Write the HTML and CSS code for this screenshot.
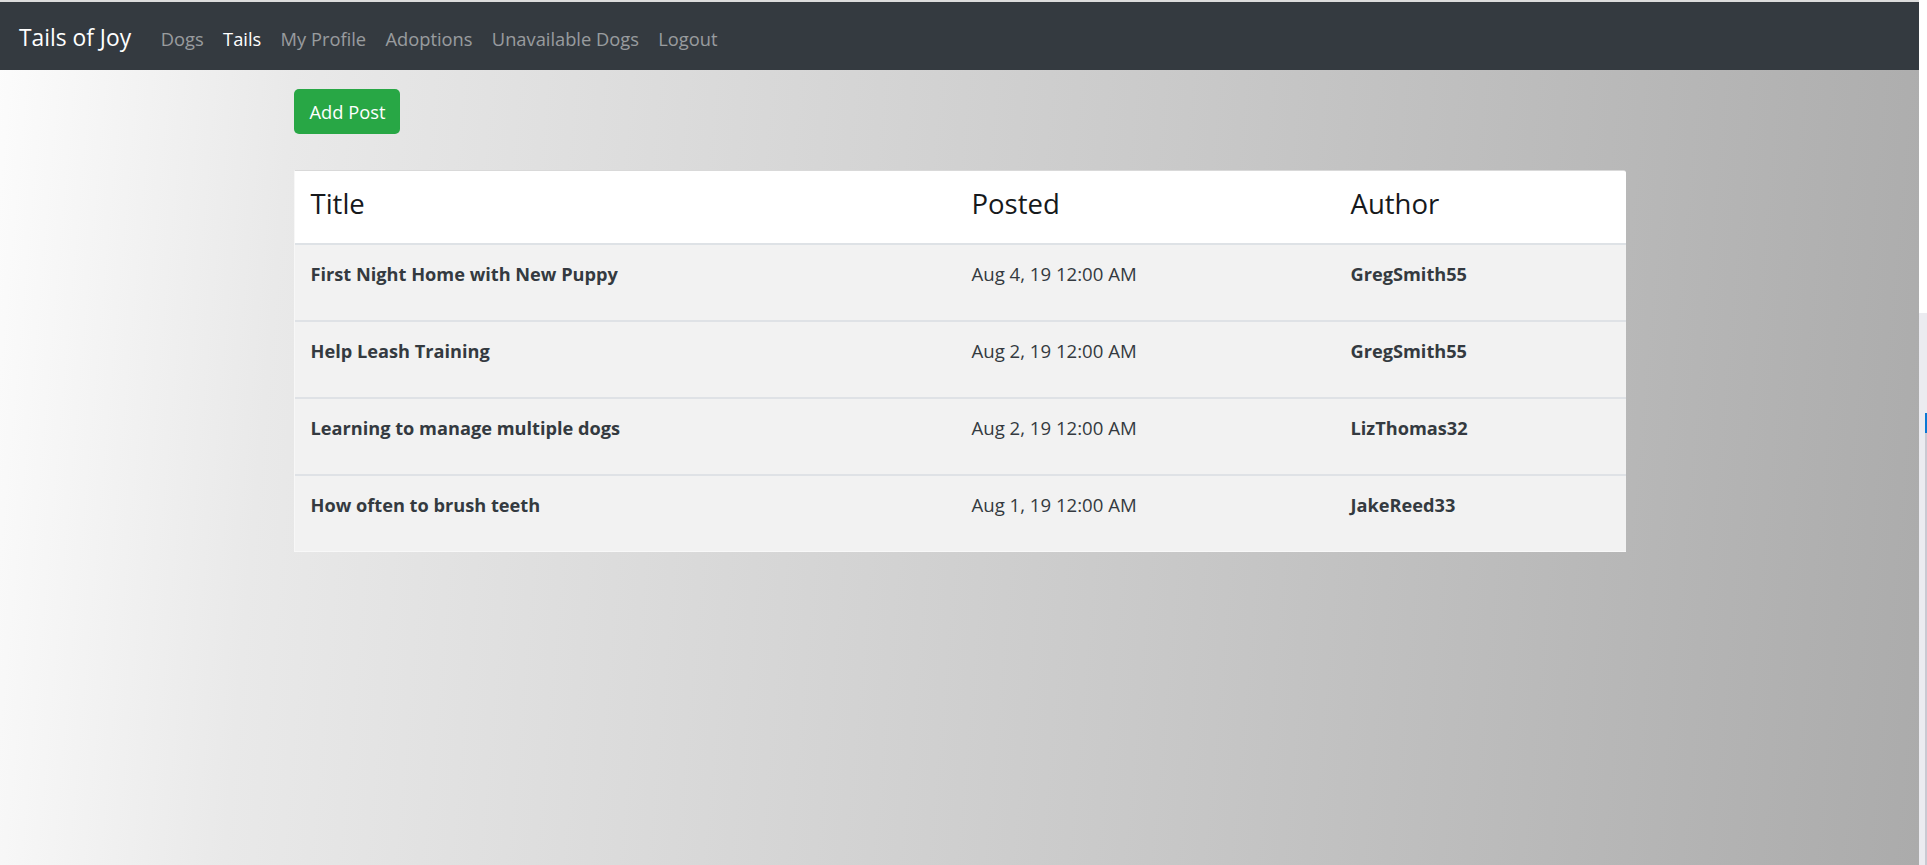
FILE: index.html
```html
<!DOCTYPE html>
<html lang="en">
<head>
<meta charset="utf-8">
<title>Tails of Joy</title>
<link rel="stylesheet" href="styles.css">
</head>
<body>
<div class="page">
  <nav class="navbar">
    <a class="brand" href="#">Tails of Joy</a>
    <ul class="nav">
      <li><a class="nav-link" href="#">Dogs</a></li>
      <li><a class="nav-link active" href="#">Tails</a></li>
      <li><a class="nav-link" href="#">My Profile</a></li>
      <li><a class="nav-link" href="#">Adoptions</a></li>
      <li><a class="nav-link" href="#">Unavailable Dogs</a></li>
      <li><a class="nav-link" href="#">Logout</a></li>
    </ul>
  </nav>
  <main class="container">
    <button class="btn-add" type="button">Add Post</button>
    <div class="card">
      <table class="posts">
        <colgroup>
          <col class="c-title">
          <col class="c-posted">
          <col class="c-author">
        </colgroup>
        <thead>
          <tr>
            <th><h4>Title</h4></th>
            <th><h4>Posted</h4></th>
            <th><h4>Author</h4></th>
          </tr>
        </thead>
        <tbody>
          <tr>
            <td><p class="strong">First Night Home with New Puppy</p></td>
            <td><p>Aug 4, 19 12:00 AM</p></td>
            <td><p class="strong">GregSmith55</p></td>
          </tr>
          <tr>
            <td><p class="strong">Help Leash Training</p></td>
            <td><p>Aug 2, 19 12:00 AM</p></td>
            <td><p class="strong">GregSmith55</p></td>
          </tr>
          <tr>
            <td><p class="strong">Learning to manage multiple dogs</p></td>
            <td><p>Aug 2, 19 12:00 AM</p></td>
            <td><p class="strong">LizThomas32</p></td>
          </tr>
          <tr>
            <td><p class="strong">How often to brush teeth</p></td>
            <td><p>Aug 1, 19 12:00 AM</p></td>
            <td><p class="strong">JakeReed33</p></td>
          </tr>
        </tbody>
      </table>
    </div>
  </main>
</div>
<aside class="edge">
  <div class="edge-top"></div>
  <div class="edge-bottom"><span class="edge-mark"></span></div>
</aside>
</body>
</html>
```

FILE: styles.css
```css
* { box-sizing: border-box; }

html, body {
  margin: 0;
  padding: 0;
  height: 100%;
}

body {
  display: flex;
  font-family: "Open Sans", "Noto Sans", sans-serif;
  font-size: 18.4px;
  color: #212529;
  overflow: hidden;
}

.page {
  width: 1919px;
  height: 865px;
  flex: none;
  border-top: 2px solid #dcdcdc;
  background: linear-gradient(95deg, #fcfcfc 0%, #e9e9e9 15%, #c9c9c9 60%, #ababab 100%);
}

.navbar {
  height: 68px;
  background: #343a40;
  display: flex;
  align-items: center;
  padding: 5px 19px 0;
}

.brand {
  color: #fff;
  text-decoration: none;
  font-size: 22.8px;
  margin-right: 20px;
  line-height: 1.5;
}

.nav {
  list-style: none;
  margin: 0;
  padding: 0;
  display: flex;
}

.nav-link {
  display: block;
  padding: 0 9.7px;
  color: rgba(255, 255, 255, 0.5);
  text-decoration: none;
  font-size: 18.3px;
  line-height: 1.5;
}

.nav-link.active { color: #fff; }

.container {
  width: 1332px;
  margin: 0 auto;
  padding-top: 19px;
}

.btn-add {
  display: block;
  height: 45px;
  padding: 0 15px 0 16px;
  border: none;
  border-radius: 5px;
  background: #28a745;
  color: #fff;
  font-family: inherit;
  font-size: 18.3px;
  line-height: 45px;
  cursor: pointer;
}

.card {
  margin-top: 36px;
  background: #f2f2f2;
  border-top: 1px solid #d9d9d9;
  border-left: 1px solid #f7f7f7;
  border-bottom: 1px solid #f8f8f8;
  border-top-right-radius: 3px;
  overflow: hidden;
}

.posts {
  width: 100%;
  border-collapse: collapse;
  table-layout: fixed;
}

.c-title { width: 661px; }
.c-posted { width: 379px; }

.posts thead tr {
  background: #fff;
  border-bottom: 2px solid #dee2e6;
}

.posts th {
  text-align: left;
  padding: 16px 16px 14px;
  vertical-align: top;
}

.posts h4 {
  margin: 0 0 9px;
  font-size: 27.5px;
  font-weight: 500;
  line-height: 33px;
  color: #16191c;
}

.posts tbody tr {
  border-bottom: 2px solid #dfe2e6;
}

.posts tbody tr:last-child { border-bottom: none; }

.posts td {
  padding: 15px 16px 14px;
  vertical-align: top;
}

.posts p {
  margin: 0 0 18px;
  line-height: 28px;
  font-size: 18.6px;
  color: #343a40;
}

.posts p.strong {
  font-weight: 700;
  font-size: 18.2px;
}

.edge {
  width: 8px;
  flex: none;
  display: flex;
  flex-direction: column;
  background: #fff;
}

.edge-top {
  height: 313px;
  background: #fff;
}

.edge-bottom {
  flex: 1;
  background: #ebebf0;
  padding-top: 100px;
  padding-left: 6px;
  border-right: 1px solid #ebebf0;
}

.edge-mark {
  display: block;
  width: 2px;
  height: 100%;
  background: linear-gradient(#0a78d4 0, #0a78d4 20px, #c9c9d2 20px);
}
```
